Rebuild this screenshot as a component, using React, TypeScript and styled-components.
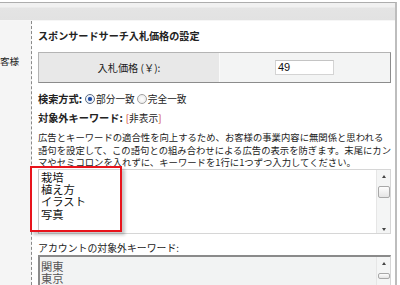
import styled, { createGlobalStyle } from "styled-components";

const GlobalStyle = createGlobalStyle`
    html, body {
        margin: 0;
        padding: 0;
        background: #fff;
    }
    body {
        font-family: "Noto Sans CJK JP", "Noto Sans", sans-serif;
        color: #222;
    }
`

const Frame = styled.div`
    width: 395px;
    height: 282px;
    margin-top: 2px;
    border-top: 1px solid #adadad;
    border-right: 2px solid #bdbdbd;
    display: flex;
    flex-direction: column;
    overflow: hidden;
`

const HeaderBand = styled.div`
    height: 17px;
    flex-shrink: 0;
    background: linear-gradient(#f1f1f1 0, #f1f1f1 4px, #e4e4e4 5px, #e2e2e2 100%);
    border-bottom: 1px solid #f6f6f6;
`

const Body = styled.div`
    flex: 1;
    display: flex;
    min-height: 0;
`

const SideColumn = styled.div`
    width: 31px;
    flex-shrink: 0;
    background: #f5f5f5;
    border-right: 1px dashed #8a8a8a;
    font-size: 9.6px;
    line-height: 14px;
    padding-top: 33px;
    white-space: nowrap;
    overflow: hidden;
`

const Main = styled.div`
    flex: 1;
    padding: 8px 7px 0 6px;
    display: flex;
    flex-direction: column;
    position: relative;
    & > * {
        flex-shrink: 0;
    }
`

const Title = styled.div`
    font-size: 10.1px;
    font-weight: 700;
    line-height: 14px;
    white-space: nowrap;
`

const PriceRow = styled.div`
    margin-top: 9px;
    height: 29px;
    display: grid;
    grid-template-columns: 181px 1fr;
    border: 1px solid #b4b4b4;
    border-right-color: #8c8c8c;
    border-bottom-color: #8c8c8c;
`

const PriceLabel = styled.div`
    background: #e8e8e8;
    display: flex;
    align-items: center;
    justify-content: center;
    font-size: 10.2px;
    border-right: 1px solid #fafafa;
`

const PriceCell = styled.div`
    background: #f3f4f4;
    display: flex;
    align-items: center;
    padding-left: 55px;
`

const PriceInput = styled.div`
    width: 55px;
    height: 13px;
    background: #fff;
    border: 1px solid #d4d4d4;
    border-top-color: #c4c4c4;
    font-family: "Liberation Sans", Arial, sans-serif;
    font-size: 11px;
    line-height: 13px;
    padding-left: 2px;
    color: #111;
`

const Row = styled.div<{ $gap?: number }>`
    margin-top: ${p => p.$gap ?? 0}px;
    display: flex;
    align-items: center;
    font-size: 9.7px;
    line-height: 14px;
    white-space: nowrap;
`

const Label = styled.span`
    font-size: 10.2px;
    font-weight: 700;
    margin-right: 3px;
`

const Radio = styled.span<{ $checked?: boolean }>`
    display: inline-block;
    width: 8px;
    height: 8px;
    border-radius: 50%;
    border: 1px solid ${p => (p.$checked ? "#5a6a80" : "#a0a0a0")};
    background: ${p =>
        p.$checked
            ? "radial-gradient(circle, #1d3f8a 0, #2a58b0 30%, #e8eef8 45%, #fff 100%)"
            : "radial-gradient(circle, #fff 0, #e6e6e6 100%)"};
    margin-right: 1px;
`

const RadioOption = styled.span`
    display: inline-flex;
    align-items: center;
    margin-right: 2px;
`

const ToggleLink = styled.span`
    color: #222;
    font-size: 9.7px;
    &::before { content: "["; color: #d03020; }
    &::after { content: "]"; color: #d03020; }
`

const Description = styled.div`
    margin-top: 6px;
    font-size: 9.35px;
    line-height: 12.5px;
    white-space: nowrap;
`

const KeywordBox = styled.div<{ $disabled?: boolean }>`
    margin-top: 0;
    height: ${p => (p.$disabled ? 42 : 63)}px;
    display: flex;
    background: ${p => (p.$disabled ? "#f2f3f3" : "#fff")};
    border: 1px solid #d6d6d6;
    border-top: ${p => (p.$disabled ? "2px solid #8a8a8a" : "1px solid #d6d6d6")};
    border-left: ${p => (p.$disabled ? "2px solid #8a8a8a" : "1px solid #c8c8c8")};
`

const KeywordList = styled.div<{ $disabled?: boolean }>`
    flex: 1;
    padding: ${p => (p.$disabled ? "3px 0 0 1px" : "1px 0 0 2px")};
    font-size: 11.3px;
    line-height: 12.4px;
    color: ${p => (p.$disabled ? "#555" : "#111")};
`

const Scrollbar = styled.div`
    width: 13px;
    display: flex;
    flex-direction: column;
    align-items: center;
    background: #f4f5f5;
    border-left: 1px solid #e6e6e6;
    padding-top: 3px;
`

const Arrow = styled.div<{ $down?: boolean }>`
    width: 0;
    height: 0;
    border-left: 2.5px solid transparent;
    border-right: 2.5px solid transparent;
    ${p => (p.$down ? "border-top: 3px solid #444;" : "border-bottom: 3px solid #444;")}
    margin: 2px 0;
`

const Thumb = styled.div<{ $height: number }>`
    width: 10px;
    height: ${p => p.$height}px;
    margin-top: 6px;
    border: 1px solid #a8a8a8;
    border-radius: 2px;
    background: linear-gradient(#fdfdfd, #e4e4e4);
`

const Track = styled.div`
    flex: 1;
`

const SubTitle = styled.div`
    margin-top: 7px;
    font-size: 9.9px;
    line-height: 14px;
    white-space: nowrap;
`

const Highlight = styled.div`
    position: absolute;
    left: -2px;
    top: 145px;
    width: 88px;
    height: 62px;
    border: 2px solid #e8141c;
    box-shadow: 3px 3px 3px rgba(0, 0, 0, 0.22);
    pointer-events: none;
`

const excluded = ["栽培", "植え方", "イラスト", "写真"]
const accountExcluded = ["関東", "東京"]

export default function App() {
    return (
        <>
            <GlobalStyle />
            <Frame>
                <HeaderBand />
                <Body>
                    <SideColumn>客様</SideColumn>
                    <Main>
                        <Title>スポンサードサーチ入札価格の設定</Title>
                        <PriceRow>
                            <PriceLabel>入札価格 (￥):</PriceLabel>
                            <PriceCell>
                                <PriceInput>49</PriceInput>
                            </PriceCell>
                        </PriceRow>
                        <Row $gap={9}>
                            <Label>検索方式:</Label>
                            <RadioOption><Radio $checked />部分一致</RadioOption>
                            <RadioOption><Radio />完全一致</RadioOption>
                        </Row>
                        <Row $gap={5}>
                            <Label>対象外キーワード:</Label>
                            <ToggleLink>非表示</ToggleLink>
                        </Row>
                        <Description>
                            広告とキーワードの適合性を向上するため、お客様の事業内容に無関係と思われる<br />
                            語句を設定して、この語句との組み合わせによる広告の表示を防ぎます。末尾にカン<br />
                            マやセミコロンを入れずに、キーワードを1行に1つずつ入力してください。
                        </Description>
                        <KeywordBox>
                            <KeywordList>
                                {excluded.map(k => <div key={k}>{k}</div>)}
                            </KeywordList>
                            <Scrollbar>
                                <Arrow />
                                <Thumb $height={10} />
                                <Track />
                                <Arrow $down />
                            </Scrollbar>
                        </KeywordBox>
                        <SubTitle>アカウントの対象外キーワード:</SubTitle>
                        <KeywordBox $disabled>
                            <KeywordList $disabled>
                                {accountExcluded.map(k => <div key={k}>{k}</div>)}
                            </KeywordList>
                            <Scrollbar>
                                <Arrow />
                                <Thumb $height={4} />
                                <Track />
                            </Scrollbar>
                        </KeywordBox>
                        <Highlight />
                    </Main>
                </Body>
            </Frame>
        </>
    )
}
